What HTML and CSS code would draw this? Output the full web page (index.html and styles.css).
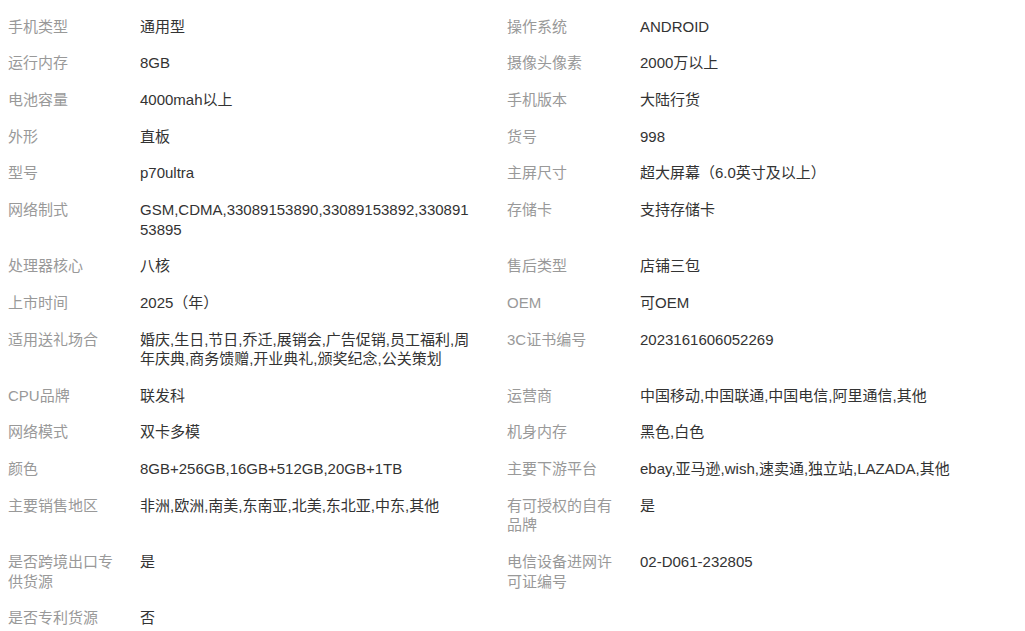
FILE: index.html
```html
<!DOCTYPE html>
<html lang="zh-CN">
<head>
<meta charset="utf-8">
<title>商品属性</title>
<link rel="stylesheet" href="styles.css">
</head>
<body>
<div class="spec-table">
  <div class="label">手机类型</div><div class="value">通用型</div>
  <div class="label">操作系统</div><div class="value">ANDROID</div>

  <div class="label">运行内存</div><div class="value">8GB</div>
  <div class="label">摄像头像素</div><div class="value">2000万以上</div>

  <div class="label">电池容量</div><div class="value">4000mah以上</div>
  <div class="label">手机版本</div><div class="value">大陆行货</div>

  <div class="label">外形</div><div class="value">直板</div>
  <div class="label">货号</div><div class="value">998</div>

  <div class="label">型号</div><div class="value">p70ultra</div>
  <div class="label">主屏尺寸</div><div class="value">超大屏幕（6.0英寸及以上）</div>

  <div class="label">网络制式</div><div class="value">GSM,CDMA,33089153890,33089153892,33089153895</div>
  <div class="label">存储卡</div><div class="value">支持存储卡</div>

  <div class="label">处理器核心</div><div class="value">八核</div>
  <div class="label">售后类型</div><div class="value">店铺三包</div>

  <div class="label">上市时间</div><div class="value">2025（年）</div>
  <div class="label">OEM</div><div class="value">可OEM</div>

  <div class="label">适用送礼场合</div><div class="value">婚庆,生日,节日,乔迁,展销会,广告促销,员工福利,周年庆典,商务馈赠,开业典礼,颁奖纪念,公关策划</div>
  <div class="label">3C证书编号</div><div class="value">2023161606052269</div>

  <div class="label">CPU品牌</div><div class="value">联发科</div>
  <div class="label">运营商</div><div class="value">中国移动,中国联通,中国电信,阿里通信,其他</div>

  <div class="label">网络模式</div><div class="value">双卡多模</div>
  <div class="label">机身内存</div><div class="value">黑色,白色</div>

  <div class="label">颜色</div><div class="value">8GB+256GB,16GB+512GB,20GB+1TB</div>
  <div class="label">主要下游平台</div><div class="value">ebay,亚马逊,wish,速卖通,独立站,LAZADA,其他</div>

  <div class="label">主要销售地区</div><div class="value">非洲,欧洲,南美,东南亚,北美,东北亚,中东,其他</div>
  <div class="label">有可授权的自有品牌</div><div class="value">是</div>

  <div class="label">是否跨境出口专供货源</div><div class="value">是</div>
  <div class="label">电信设备进网许可证编号</div><div class="value">02-D061-232805</div>

  <div class="label">是否专利货源</div><div class="value">否</div>
  <div class="label"></div><div class="value"></div>
</div>
</body>
</html>
```

FILE: styles.css
```css
html, body {
  background: #ffffff;
}

body {
  margin: 8px;
  font-family: "Liberation Sans", "Noto Sans CJK SC", sans-serif;
  font-size: 15px;
  line-height: 19.5px;
  color: #333333;
}

.spec-table {
  display: grid;
  grid-template-columns: 132px 367px 133px 1fr;
}

.label,
.value {
  padding: 8.6px 0;
  word-break: break-all;
}

.label {
  color: #999999;
  padding-right: 20px;
}

.value {
  color: #333333;
  padding-right: 35px;
}
```
